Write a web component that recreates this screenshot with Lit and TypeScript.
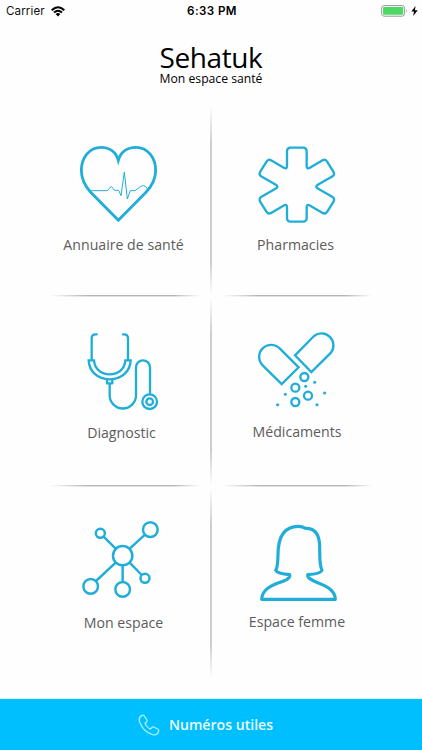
import { LitElement, html, svg, css } from "lit";
import { customElement } from "lit/decorators.js";

type Point = [number, number];

// Builds a closed path whose corners are softened by the given radius.
function roundedPath(points: Point[], radius: number): string {
  const toward = (a: Point, b: Point): string => {
    const length = Math.hypot(b[0] - a[0], b[1] - a[1]);
    const x = a[0] + ((b[0] - a[0]) * radius) / length;
    const y = a[1] + ((b[1] - a[1]) * radius) / length;
    return `${x.toFixed(1)} ${y.toFixed(1)}`;
  };
  return (
    points
      .map((p, i) => {
        const before = points[(i + points.length - 1) % points.length];
        const after = points[(i + 1) % points.length];
        return `${i ? "L" : "M"}${toward(p, before)} Q${p[0]} ${p[1]} ${toward(p, after)}`;
      })
      .join(" ") + "Z"
  );
}

const star = roundedPath(
  [
    [228, 53], [287, 53], [287, 119], [343, 86], [373, 134], [311, 170],
    [373, 206], [343, 254], [287, 221], [287, 275], [228, 275], [228, 221],
    [172, 254], [142, 206], [204, 170], [142, 134], [172, 86], [228, 119],
  ],
  11,
);

const heartIcon = html`<svg class="icon" viewBox="81 36 252 252">
  <path stroke-width="8.5" stroke-linejoin="miter" d="M205 91 C198 66 178 52 153 52 C118 52 94 84 94 121 C94 147 104 167 122 187 L205 271 L288 187 C307 167 317 147 317 121 C317 84 293 52 258 52 C232 52 212 66 205 91Z"/>
  <path stroke-width="3" d="M120 182 H171 C177 181 178 170 184 170 C189 171 189 181 195 181 H206 L213 197 L223 126 L232 207 L241 182 H255 C265 176 271 167 281 167 Q288 168 294 179"/>
</svg>`;

const starIcon = html`<svg class="icon" viewBox="132 36 252 252">
  <path stroke-width="7" d=${star} />
</svg>`;

const stethoscopeIcon = html`<svg class="icon" viewBox="81 21 252 252">
  <g stroke-width="7">
    <path stroke-linecap="round" d="M140 43 H137 Q125 43 125 55 V118 M219 43 H222 Q234 43 234 55 V118"/>
    <path stroke-linejoin="miter" d="M116 121 H132 C134 147 154 163 179 163 C205 163 224 147 226 121 H242 C240 154 216 178 179 178 C142 178 118 154 116 121Z"/>
    <path d="M171 177 V190 H187 V177 M179 190 V226 A39.5 39.5 0 0 0 258 226 V142 A21 21 0 0 1 300 142 V222"/>
    <circle cx="299" cy="245" r="22"/>
    <circle cx="299" cy="245" r="10"/>
  </g>
</svg>`;

const grains = [[311, 187], [284, 199], [341, 219], [223, 223], [200, 254], [318, 254]];
const beads = [[280, 171], [253, 203], [291, 227], [253, 246]];
const pillsIcon = html`<svg class="icon" viewBox="132 21 252 252">
  <g stroke-width="7" stroke-linejoin="miter">
    <path d="M263 142 L206 85 A36 36 0 0 0 155 136 L212 192Z"/>
    <path d="M252 106 L309 48 A36 36 0 0 1 360 98 L301 156Z"/>
    ${beads.map(([x, y]) => svg`<circle cx=${x} cy=${y} r="12"/>`)}
  </g>
  ${grains.map(([x, y]) => svg`<circle class="grain" cx=${x} cy=${y} r="4.6"/>`)}
</svg>`;

const networkIcon = html`<svg class="icon" viewBox="81 126 252 252">
  <g stroke-width="7.4">
    <circle cx="218" cy="242" r="29"/>
    <circle cx="301" cy="164" r="22"/>
    <circle cx="151" cy="175" r="13.5"/>
    <circle cx="122" cy="334" r="22"/>
    <circle cx="218" cy="343" r="22"/>
    <circle cx="285" cy="310" r="13.5"/>
    <path d="M239 221 L285 179 M197 221 L161 185 M197 263 L138 318 M218 271 V321 M239 263 L275 300"/>
  </g>
</svg>`;

const womanIcon = html`<svg class="icon" viewBox="132 126 252 252">
  <path stroke-width="9.5" d="M152 373 C153 347 174 334 203 323 C226 315 239 310 236 299 C220 298 199 295 194 286 C201 275 200 260 201 240 C201 188 217 154 262 154 C272 154 277 156 284 160 C314 159 325 182 326 212 C327 245 324 267 333 286 C329 294 305 298 290 299 C289 310 302 316 322 324 C350 335 372 347 373 373Z"/>
</svg>`;

const tiles = [
  { name: "annuaire", label: "Annuaire de santé", icon: heartIcon },
  { name: "pharmacies", label: "Pharmacies", icon: starIcon },
  { name: "diagnostic", label: "Diagnostic", icon: stethoscopeIcon },
  { name: "medicaments", label: "Médicaments", icon: pillsIcon },
  { name: "espace", label: "Mon espace", icon: networkIcon },
  { name: "femme", label: "Espace femme", icon: womanIcon },
];

@customElement("status-bar")
export class StatusBar extends LitElement {
  static styles = css`
    :host { display: grid; grid-template-columns: 1fr auto 1fr; align-items: center; height: 22px; padding: 0 4px 0 6px; box-sizing: border-box; font: 11.6px/22px Inter, sans-serif; color: #111; }
    .left, .right { display: flex; align-items: center; }
    .left { gap: 6px; letter-spacing: 0.1px; }
    .right { justify-content: flex-end; gap: 3px; }
    .time { font-weight: 600; letter-spacing: 0.4px; color: #000; }
    svg { display: block; }
  `;
  render() {
    return html`
      <div class="left">
        <span>Carrier</span>
        <svg width="14" height="11" viewBox="0 0 14 11" fill="none" stroke="#000" stroke-width="2">
          <path d="M0.700 4.200 Q7 -1.800 13.300 4.200 M3 6.500 Q7 2.900 11 6.500"/>
          <path fill="#000" stroke="none" d="M4.600 8 Q7 6 9.400 8 L7 10.400Z"/>
        </svg>
      </div>
      <span class="time">6:33 PM</span>
      <div class="right">
        <svg width="27" height="12" viewBox="0 0 27 12">
          <rect x="0.600" y="0.600" width="23" height="10.600" rx="2.600" fill="#fff" stroke="#999" stroke-width="1"/>
          <rect x="2" y="2" width="20.200" height="7.800" rx="1.200" fill="#4cd964"/>
          <path d="M25 4 Q26.600 5.900 25 7.800Z" fill="#999"/>
        </svg>
        <svg width="7" height="10" viewBox="0 0 7 10"><path d="M4.600 0 L0.300 5.600 H3 L2.200 10 L6.700 4.200 H3.900Z"/></svg>
      </div>
    `;
  }
}

@customElement("app-root")
export class AppRoot extends LitElement {
  static styles = css`
    :host { display: flex; flex-direction: column; height: 750px; background: #fefefe; overflow: hidden; font-family: "Open Sans", sans-serif; }
    .heading { display: flex; flex-direction: column; align-items: center; height: 84px; padding-top: 17px; box-sizing: border-box; color: #000; }
    h1 { margin: 0; font-size: 28px; line-height: 36px; font-weight: 400; letter-spacing: -0.400px; }
    .tagline { font-size: 12.200px; line-height: 16px; margin-top: -4px; }
    .board { display: grid; grid-template-columns: 150px 22px 150px; grid-template-rows: 189px 2px 188px 2px 191px; margin: 0 auto; width: 322px; }
    .tile { display: flex; flex-direction: column; align-items: center; padding-top: 36px; }
    .icon { display: block; width: 84px; height: 84px; fill: none; stroke: #20aed8; stroke-linejoin: round; }
    .grain { fill: #20aed8; stroke: none; }
    .label { margin-top: 8px; font-size: 14.150px; line-height: 22px; color: #5c5c5c; white-space: nowrap; }
    .diagnostic, .medicaments, .espace, .femme { padding-top: 30px; }
    .annuaire .icon, .diagnostic .icon, .espace .icon { margin-right: 12px; }
    .annuaire .label, .espace .label, .pharmacies .label { margin-right: 3px; }
    .diagnostic .label { margin-right: 7px; margin-top: 11px; }
    .medicaments .label, .femme .label { margin-top: 10px; }
    .espace .label { margin-top: 11px; }
    .rule { background: linear-gradient(180deg, rgba(255,255,255,0) 50%, rgba(255,255,255,0.6) 50%), linear-gradient(90deg, transparent, #b4b4b4 25%, #b4b4b4 82%, transparent); }
    .stem { width: 2px; justify-self: center; background: linear-gradient(180deg, transparent, #cdcdcd 20%, #cdcdcd 82%, transparent); }
    .footer { margin-top: auto; height: 52px; box-sizing: border-box; border-top: 1px solid #d9f8ff; padding-right: 11px; display: flex; align-items: center; justify-content: center; gap: 9px; background: #00bfff; color: #e9fbff; font-size: 14.100px; font-weight: 600; }
    .phone { width: 22px; height: 22px; fill: none; stroke: #a5eeff; stroke-width: 4; stroke-linejoin: round; }
  `;
  private tile(i: number) {
    const t = tiles[i];
    return html`<div class="tile ${t.name}">${t.icon}<span class="label">${t.label}</span></div>`;
  }
  render() {
    return html`
      <status-bar></status-bar>
      <header class="heading"><h1>Sehatuk</h1><div class="tagline">Mon espace santé</div></header>
      <main class="board">
        ${this.tile(0)}<div class="stem"></div>${this.tile(1)}
        <div class="rule"></div><div></div><div class="rule"></div>
        ${this.tile(2)}<div class="stem"></div>${this.tile(3)}
        <div class="rule"></div><div></div><div class="rule"></div>
        ${this.tile(4)}<div class="stem"></div>${this.tile(5)}
      </main>
      <footer class="footer">
        <svg class="phone" viewBox="53 160 66 66"><path d="M66 164 C58 167 55 175 58 184 C65 203 80 217 97 222 C106 224 113 219 115 211 Q116 207 112 205 L100 199 Q97 198 94 201 L90 205 C84 203 76 194 74 188 L79 184 Q81 181 79 177 L72 166 Q70 163 66 164Z"/></svg>
        <span>Numéros utiles</span>
      </footer>
    `;
  }
}
